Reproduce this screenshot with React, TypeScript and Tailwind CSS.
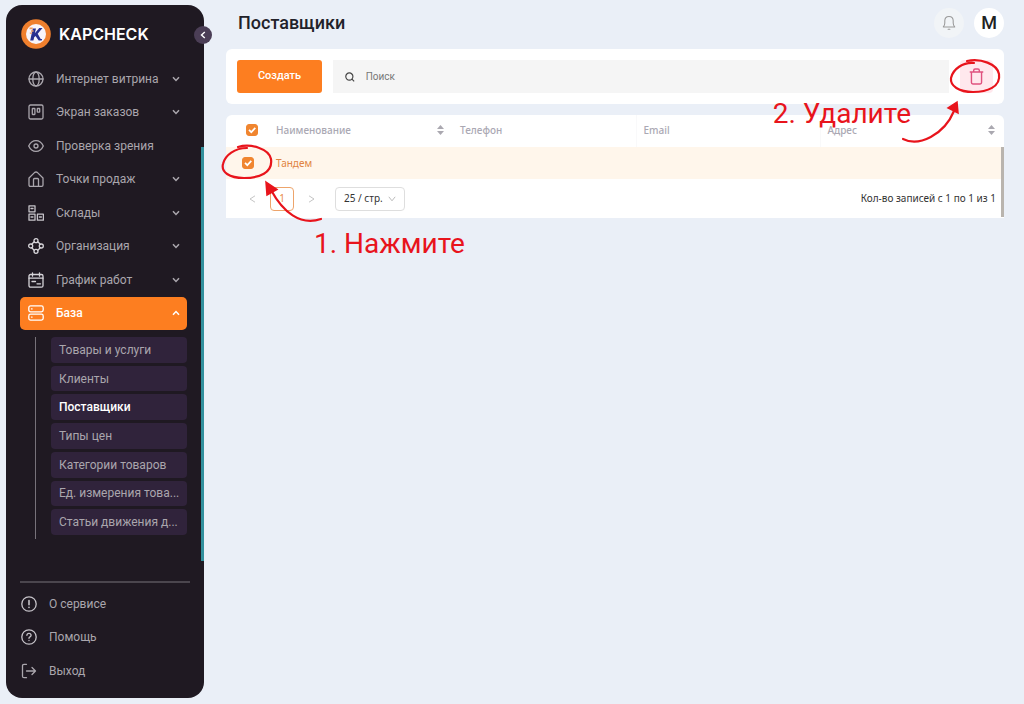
import type { ReactNode } from "react";
import { useState } from "react";
import clsx from "clsx";

type NavItem = {
  label: string;
  icon: ReactNode;
  expandable?: boolean;
  active?: boolean;
};

function Icon({ children, className }: { children: ReactNode; className?: string }) {
  return (
    <svg
      viewBox="0 0 16 16"
      className={clsx("h-4 w-4 shrink-0", className)}
      fill="none"
      stroke="currentColor"
      strokeWidth="1.3"
      strokeLinecap="round"
      strokeLinejoin="round"
      aria-hidden
    >
      {children}
    </svg>
  );
}

const NAV: NavItem[] = [
  {
    label: "Интернет витрина",
    expandable: true,
    icon: (
      <Icon>
        <circle cx="8" cy="8" r="7" />
        <ellipse cx="8" cy="8" rx="3.2" ry="7" />
        <path d="M1 8h14" />
      </Icon>
    ),
  },
  {
    label: "Экран заказов",
    expandable: true,
    icon: (
      <Icon>
        <rect x="1" y="1" width="14" height="14" rx="1.5" />
        <rect x="4.3" y="4.5" width="2.6" height="6" rx="0.4" />
        <rect x="9.3" y="4.5" width="2.4" height="3.6" rx="0.4" />
      </Icon>
    ),
  },
  {
    label: "Проверка зрения",
    icon: (
      <Icon>
        <path d="M0.7 8C2.3 4.5 5 2.6 8 2.6S13.7 4.5 15.3 8C13.7 11.5 11 13.4 8 13.4S2.3 11.5 .7 8Z" />
        <circle cx="8" cy="8" r="2" />
      </Icon>
    ),
  },
  {
    label: "Точки продаж",
    expandable: true,
    icon: (
      <Icon>
        <path d="M1 7 6.5 1.6Q8 .4 9.5 1.6L15 7V14Q15 15.3 13.7 15.3H2.3Q1 15.3 1 14Z" />
        <path d="M5.5 15V8.5Q5.5 7.5 6.5 7.5H9.5Q10.5 7.5 10.5 8.5V15" />
      </Icon>
    ),
  },
  {
    label: "Склады",
    expandable: true,
    icon: (
      <Icon className="text-[#c6c3c9]">
        <rect x="1" y="0.8" width="6" height="6" />
        <rect x="1" y="9.2" width="6" height="6" />
        <rect x="9.4" y="9.2" width="6" height="6" />
        <path d="M3 3.5h2M3 12h2M11.4 12h2" />
      </Icon>
    ),
  },
  {
    label: "Организация",
    expandable: true,
    icon: (
      <Icon className="text-[#d6d4d9]">
        <circle cx="8" cy="2.7" r="2" />
        <circle cx="2.7" cy="8" r="2" />
        <circle cx="13.3" cy="8" r="2" />
        <circle cx="8" cy="13.3" r="2" />
        <path d="M6.2 3.7 3.7 6.2M9.8 3.7l2.5 2.5M3.7 9.8l2.5 2.5M12.3 9.8l-2.5 2.5" />
      </Icon>
    ),
  },
  {
    label: "График работ",
    expandable: true,
    icon: (
      <Icon className="text-[#d6d4d9]">
        <rect x="1" y="2.5" width="14" height="12.7" rx="1.5" />
        <path d="M4.5 .8v3.4M11.5 .8v3.4M1 6.2h14M4 9.5h3.5M9 11.8h3.5" />
      </Icon>
    ),
  },
  {
    label: "База",
    expandable: true,
    active: true,
    icon: (
      <Icon>
        <rect x="0.8" y="0.9" width="14.4" height="6" rx="1.8" />
        <rect x="0.8" y="9.1" width="14.4" height="6" rx="1.8" />
        <path d="M3.5 3.9h.6M3.5 12.1h.6" />
      </Icon>
    ),
  },
];

const SUB_NAV = [
  "Товары и услуги",
  "Клиенты",
  "Поставщики",
  "Типы цен",
  "Категории товаров",
  "Ед. измерения това...",
  "Статьи движения д...",
];

const FOOTER_NAV: NavItem[] = [
  {
    label: "О сервисе",
    icon: (
      <Icon className="text-[#c6c3c9]">
        <circle cx="8" cy="8" r="7.2" />
        <path d="M8 4.5v4.3M8 11.2v.2" strokeWidth="1.6" />
      </Icon>
    ),
  },
  {
    label: "Помощь",
    icon: (
      <Icon className="text-[#c6c3c9]">
        <circle cx="8" cy="8" r="7.2" />
        <path d="M5.9 6.3Q6 4.4 8 4.4T10.1 6.3Q10.1 7.3 9 7.9Q8 8.4 8 9.3M8 11.5v.1" />
      </Icon>
    ),
  },
  {
    label: "Выход",
    icon: (
      <Icon>
        <path d="M5.5 1.3H3Q1.5 1.3 1.5 2.8V13.2Q1.5 14.7 3 14.7H5.5" />
        <path d="M5.5 8H14.5M11 4.5 14.5 8 11 11.5" />
      </Icon>
    ),
  },
];

function Chevron({ up }: { up?: boolean }) {
  return (
    <svg viewBox="0 0 8 6" className="h-1.5 w-2 shrink-0" fill="none" stroke="currentColor" strokeWidth="1.5" aria-hidden>
      <path d={up ? "M1 4.8 4 1.5l3 3.3" : "M1 1.2 4 4.5l3-3.3"} />
    </svg>
  );
}

function Logo() {
  return (
    <svg viewBox="0 0 30 30" className="h-[30px] w-[30px] shrink-0" aria-hidden>
      <circle cx="15" cy="15" r="14.8" fill="#ef7f2d" />
      <circle cx="15" cy="15" r="10" fill="#f8f5fa" />
      <path d="M11.8 9.5h3.2l-1.2 4.8L18.3 9h3.2l-4.8 5.8 3 5.2h1.4l-.4 1.5h-3L14.5 17l-1.3 1.2-.8 3.3H9.2Z" fill="#29308f" />
      <path d="M8.5 8.5h3.2v1.7H8.5ZM10 11.2h2.6v1.5H10ZM8.8 13.5h2.4v1.3H8.8Z" fill="#ee9a61" />
    </svg>
  );
}

function Sidebar() {
  return (
    <aside className="relative flex w-[198px] shrink-0 flex-col rounded-2xl bg-[#1f1922] pb-2.5 text-xs text-[#aaa6ad]">
      <div className="flex h-[57px] items-center gap-2 pl-[15px]">
        <Logo />
        <span className="font-['Inter'] text-base font-semibold text-white">KAPCHECK</span>
      </div>
      <button
        type="button"
        aria-label="Свернуть меню"
        className="absolute top-[21px] -right-2 grid h-[18px] w-[18px] place-items-center rounded-full bg-[#4b3e56] text-white"
      >
        <svg viewBox="0 0 6 8" className="h-2 w-1.5" fill="none" stroke="currentColor" strokeWidth="1.4">
          <path d="M4.8 1 1.5 4l3.3 3" />
        </svg>
      </button>
      {/* scroll thumb */}
      <div className="absolute top-[142px] right-0 h-[414px] w-[3px] bg-[#32909d]" />

      <nav className="px-3.5">
        <ul className="grid h-[268px] grid-rows-8">
          {NAV.map((item) => (
            <li key={item.label} className="mr-[3px]">
              <a
                href="#"
                className={clsx(
                  "flex h-full items-center gap-3 rounded-[5px] pr-[7px] pl-2",
                  item.active && "bg-[#fd7e20] font-medium text-white",
                )}
              >
                {item.icon}
                <span className="flex-1 whitespace-nowrap">{item.label}</span>
                {item.expandable && <Chevron up={item.active} />}
              </a>
            </li>
          ))}
        </ul>
        <div className="mt-[7px] ml-[15px] border-l border-[#77727a] pb-1 pl-[15px]">
          <ul className="mr-[3px] grid h-[198px] grid-rows-7 gap-[3px]">
            {SUB_NAV.map((label) => (
              <li key={label}>
                <a
                  href="#"
                  className={clsx(
                    "flex h-full items-center rounded bg-[#30233b] pl-2 whitespace-nowrap",
                    label === "Поставщики" && "font-medium text-white",
                  )}
                >
                  {label}
                </a>
              </li>
            ))}
          </ul>
        </div>
      </nav>

      <div className="mx-3.5 mt-auto border-t-2 border-[#4b464e] pt-1">
        <ul className="grid h-[101px] grid-rows-3">
          {FOOTER_NAV.map((item) => (
            <li key={item.label}>
              <a href="#" className="flex h-full items-center gap-3 pl-px">
                {item.icon}
                <span>{item.label}</span>
              </a>
            </li>
          ))}
        </ul>
      </div>
    </aside>
  );
}

function Checkbox({ label }: { label: string }) {
  const [checked, setChecked] = useState(true);
  return (
    <label className="inline-grid h-3 w-3 align-middle">
      <input
        type="checkbox"
        aria-label={label}
        checked={checked}
        onChange={(e) => setChecked(e.target.checked)}
        className="peer col-start-1 row-start-1 h-3 w-3 appearance-none rounded-[3px] border border-[#f0852f] checked:bg-[#f0852f]"
      />
      <svg viewBox="0 0 12 12" className="pointer-events-none invisible col-start-1 row-start-1 h-3 w-3 peer-checked:visible" fill="none" stroke="white" strokeWidth="1.7">
        <path d="M3 5.8 5.3 8.2 9.3 3.9" />
      </svg>
    </label>
  );
}

function SortIcon() {
  return (
    <svg viewBox="0 0 7 10" className="h-2.5 w-[7px]" fill="#aaa8b0" aria-hidden>
      <path d="M3.5 0 7 4H0ZM3.5 10 0 6h7Z" />
    </svg>
  );
}

function Toolbar() {
  return (
    <div className="flex gap-[11px] rounded-md bg-white p-[11px]">
      <button type="button" className="h-[33px] w-[85px] rounded-[3px] bg-[#fd7e20] text-[11px] font-medium text-white">
        Создать
      </button>
      <label className="flex h-[33px] flex-1 items-center gap-[11px] bg-[#f5f5f5] pl-3">
        <svg viewBox="0 0 10 10" className="h-2.5 w-2.5" fill="none" stroke="#444" strokeWidth="1.2" aria-hidden>
          <circle cx="4.5" cy="4.5" r="3.7" />
          <path d="m7.2 7.2 2.3 2.3" />
        </svg>
        <input
          type="search"
          aria-label="Поиск"
          placeholder="Поиск"
          className="h-full w-full bg-transparent text-[10px] outline-none placeholder:text-[#777]"
        />
      </label>
      <button type="button" aria-label="Удалить" className="grid h-[33px] w-[33px] place-items-center rounded bg-[#ffe8ed] text-[#e0527f]">
        <svg viewBox="0 0 16 18" className="h-[17px] w-[15px]" fill="none" stroke="currentColor" strokeWidth="1.5" strokeLinejoin="round">
          <path d="M.8 4.2h14.4M2.6 4.2v11.3q0 1.5 1.5 1.5h7.8q1.5 0 1.5-1.5V4.2M5 4V2.5Q5 1 6.5 1h3Q11 1 11 2.5V4" />
        </svg>
      </button>
    </div>
  );
}

function SuppliersTable() {
  return (
    <section className="relative mt-[11px] rounded-t-md bg-white font-['Noto_Sans'] text-[10px] text-[#333]">
      <table className="w-full table-fixed">
        <thead>
          <tr className="h-8 text-left text-[#aaa8b3]">
            <th className="w-[42px] pb-0.5 pl-5 leading-none">
              <Checkbox label="Выбрать все" />
            </th>
            <th className="px-2 pb-0.5 font-medium">
              <span className="flex items-center justify-between">
                Наименование
                <SortIcon />
              </span>
            </th>
            <th className="px-2 pb-0.5 font-medium">Телефон</th>
            <th className="border-l border-[#f9f9fa] px-[7px] pb-0.5 font-medium">Email</th>
            <th className="border-l border-[#f9f9fa] pr-[9px] pb-0.5 pl-[7px] font-medium">
              <span className="flex items-center justify-between">
                Адрес
                <SortIcon />
              </span>
            </th>
          </tr>
        </thead>
        <tbody>
          <tr className="h-8 bg-[#fff6eb] text-[#df8442]">
            <td className="pl-4 leading-none">
              <Checkbox label="Выбрать Тандем" />
            </td>
            <td className="px-2">Тандем</td>
            <td />
            <td />
            <td />
          </tr>
        </tbody>
      </table>
      <div className="absolute top-8 right-0 h-[70px] w-[3px] bg-[#b9b4ae]" />

      <div className="flex h-[39px] items-center pr-2 pl-[23px]">
        <button type="button" aria-label="Назад" className="text-[#c4c4c4]">
          <svg viewBox="0 0 7 8" className="h-2 w-[7px]" fill="none" stroke="currentColor">
            <path d="M6 .8 1 4l5 3.2" />
          </svg>
        </button>
        <button type="button" className="ml-3.5 h-6 w-6 rounded border border-[#eda46b] text-[#e98b45]">
          1
        </button>
        <button type="button" aria-label="Вперёд" className="ml-3.5 text-[#c4c4c4]">
          <svg viewBox="0 0 7 8" className="h-2 w-[7px]" fill="none" stroke="currentColor">
            <path d="m1 .8 5 3.2-5 3.2" />
          </svg>
        </button>
        <div className="ml-5 grid h-6 w-[70px] items-center rounded border border-[#dedede]">
          <select aria-label="Записей на странице" className="col-start-1 row-start-1 h-full w-full appearance-none bg-transparent pl-2 outline-none">
            <option>25 / стр.</option>
            <option>50 / стр.</option>
          </select>
          <svg viewBox="0 0 8 6" className="pointer-events-none col-start-1 row-start-1 mr-2 h-1.5 w-2 justify-self-end" fill="none" stroke="#bbb">
            <path d="m.8.8 3.2 4 3.2-4" />
          </svg>
        </div>
        <span className="ml-auto">Кол-во записей с 1 по 1 из 1</span>
      </div>
    </section>
  );
}

/* Hand-drawn hints, laid over the toolbar and the table */
function Hints() {
  return (
    <div className="pointer-events-none absolute inset-0 text-[#e8141c]">
      <svg viewBox="216 140 110 90" className="absolute top-[91px] -left-2.5 h-[90px] w-[110px]" fill="none" stroke="currentColor" strokeWidth="2.2" strokeLinecap="round">
        <path d="M238 147C251 143 269 149 271 159C273 173 259 178 244 178C229 178 221 172 223 164C225 155 235 148 247 148" />
        <path d="M321 219C300 226 283 212 271 190" />
        <path d="M266 182 277 189.500 267 195Z" fill="currentColor" strokeWidth="1.500" />
      </svg>
      <svg viewBox="894 50 110 100" className="absolute top-px right-0 h-[100px] w-[110px]" fill="none" stroke="currentColor" strokeWidth="2.2" strokeLinecap="round">
        <path d="M967 61C981 58 997 64 999 74C1001 87 987 92 973 92C959 92 950 86 951 78C953 69 963 62 974 63" />
        <path d="M903 139C919 147 944 135 954 111" />
        <path d="M957 102 948 108 958 113Z" fill="currentColor" strokeWidth="1.500" />
      </svg>
      <p className="absolute top-[177px] left-[88px] text-[28px] leading-9 whitespace-nowrap">1. Нажмите</p>
      <p className="absolute top-[47px] right-[93px] text-[28px] leading-9 whitespace-nowrap">2. Удалите</p>
    </div>
  );
}

export default function App() {
  return (
    <div className="flex min-h-screen bg-[#eaeff7] pt-[5px] pb-1.5 pl-1.5 font-['Roboto',sans-serif]">
      <Sidebar />
      <main className="min-w-0 flex-1 pr-5 pl-[22px]">
        <header className="flex h-11 items-start justify-between pl-3">
          <h1 className="pt-1 text-lg font-medium text-[#22222a]">Поставщики</h1>
          <div className="flex gap-2.5 pt-[3px]">
            <button type="button" aria-label="Уведомления" className="grid h-[30px] w-[30px] place-items-center rounded-full bg-[#f1f4f7] text-[#999]">
              <svg viewBox="0 0 16 18" className="h-4 w-3.5" fill="none" stroke="currentColor" strokeWidth="1.2" strokeLinecap="round" strokeLinejoin="round">
                <path d="M1.5 13.5h13Q12.8 11.5 12.8 9V6.5Q12.8 1.5 8 1.5T3.2 6.5V9Q3.2 11.5 1.5 13.5ZM7 16.2h2" />
              </svg>
            </button>
            <button type="button" aria-label="Профиль" className="h-[30px] w-[30px] rounded-full bg-white text-lg font-medium text-[#222]">
              M
            </button>
          </div>
        </header>
        <div className="relative">
          <Toolbar />
          <SuppliersTable />
          <Hints />
        </div>
      </main>
    </div>
  );
}
